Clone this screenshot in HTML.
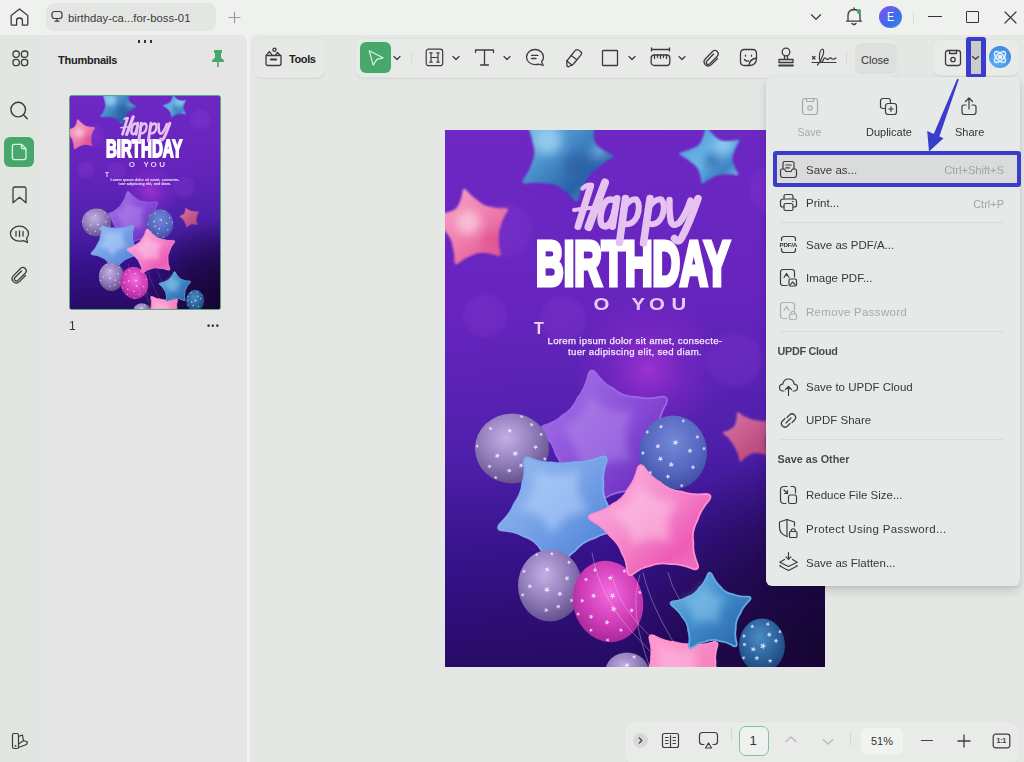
<!DOCTYPE html>
<html><head><meta charset="utf-8">
<style>
*{box-sizing:border-box;margin:0;padding:0}
html,body{width:1024px;height:762px;overflow:hidden}
body{position:relative;background:#eef1ee;font-family:"Liberation Sans",sans-serif;color:#333}
.a{position:absolute}
svg.i{position:absolute;fill:none;stroke:#3c3c3c;stroke-width:1.3;stroke-linecap:round;stroke-linejoin:round}
.mi{position:absolute;left:806px;font-size:11.5px;color:#383838;white-space:nowrap;line-height:14px}
.sep{position:absolute;left:780px;width:223px;height:1px;background:#d9dbd9}
</style></head>
<body>
<!-- top bar -->
<div class="a" style="left:0;top:0;width:1024px;height:35px;background:#eef1ee"></div>
<!-- left rail -->
<div class="a" style="left:0;top:35px;width:40px;height:727px;background:#e1e6e1"></div>
<!-- thumbnails panel -->
<div class="a" style="left:36px;top:35px;width:211px;height:727px;background:linear-gradient(90deg,#e2e6e2,#e4e5e4 8px);border-radius:8px 8px 0 0"></div>
<!-- main canvas -->
<div class="a" style="left:247px;top:35px;width:3px;height:727px;background:#f0f1f0"></div><div class="a" style="left:250px;top:35px;width:774px;height:727px;background:#e4e7e4;border-radius:8px 0 0 0"></div>


<!-- TOP BAR -->
<svg class="i" style="left:9px;top:7px" width="21" height="20" viewBox="0 0 21 20"><path d="M2.2 17.2V8.6L10.5 2 18.8 8.6V17.2Q18.8 18.2 17.8 18.2H13.4V13.2Q13.4 11 10.5 11 7.6 11 7.6 13.2V18.2H3.2Q2.2 18.2 2.2 17.2Z"/></svg>
<div class="a" style="left:46px;top:3px;width:170px;height:28px;border-radius:8px;background:#e4e6e4"></div>
<svg class="i" style="left:51px;top:10px;stroke-width:1.2" width="12" height="13" viewBox="0 0 12 13"><rect x="1" y="1.5" width="10" height="7" rx="2.5"/><path d="M6 8.5V11M4 11.2H8"/></svg>
<div class="a" style="left:68px;top:12px;font-size:11.3px;color:#3a3a3a;white-space:nowrap">birthday-ca...for-boss-01</div>
<svg class="i" style="left:228px;top:11px;stroke:#9a9a9a;stroke-width:1.1" width="13" height="13" viewBox="0 0 13 13"><path d="M6.5 1V12M1 6.5H12"/></svg>

<svg class="i" style="left:810px;top:13px;stroke-width:1.3" width="12" height="8" viewBox="0 0 12 8"><path d="M1.5 1.8L6 6.2 10.5 1.8"/></svg>
<svg class="i" style="left:845px;top:6px;stroke-width:1.3" width="18" height="20" viewBox="0 0 18 20"><path d="M3 15V9.5Q3 4 9 3.5 15 4 15 9.5V15M1.5 15.2H16.5M7 17.5Q9 19.5 11 17.5M9 3.5V2"/></svg>
<div class="a" style="left:856.5px;top:9px;width:4.5px;height:4.5px;border-radius:50%;background:#3aa86a"></div>
<div class="a" style="left:879px;top:6px;width:23px;height:22px;border-radius:50%;background:linear-gradient(135deg,#8a4ff2,#3b6fe8 60%,#2f8fe0)"></div>
<div class="a" style="left:886.5px;top:10px;font-size:13px;color:#fff;line-height:14px;transform:scaleX(0.82);transform-origin:0 0">E</div>
<div class="a" style="left:913px;top:12px;width:1px;height:13px;background:#dcdedc"></div>
<div class="a" style="left:928px;top:16px;width:14px;height:1.4px;background:#333"></div>
<div class="a" style="left:965.5px;top:11px;width:13.5px;height:11.5px;border:1.4px solid #333;border-radius:1px"></div>
<svg class="i" style="left:1004px;top:11px;stroke-width:1.2" width="13" height="13" viewBox="0 0 13 13"><path d="M1 1L12 12M12 1L1 12"/></svg>

<!-- LEFT RAIL -->
<svg class="i" style="left:11.5px;top:50px;stroke-width:1.3" width="17" height="17" viewBox="0 0 17 17"><rect x="1" y="1" width="6.3" height="6.3" rx="2.6"/><rect x="9.4" y="1" width="6.3" height="6.3" rx="2.6"/><rect x="1" y="9.4" width="6.3" height="6.3" rx="2.6"/><rect x="9.4" y="9.4" width="6.3" height="6.3" rx="2.6"/></svg>
<svg class="i" style="left:9px;top:100px;stroke-width:1.4" width="20" height="21" viewBox="0 0 20 21"><circle cx="9.2" cy="9.6" r="7.3"/><path d="M14.6 15L18.3 18.8"/></svg>
<div class="a" style="left:4px;top:137px;width:30px;height:30px;border-radius:6px;background:#48a86b"></div>
<svg class="i" style="left:11px;top:143px;stroke:#d8f5e0;stroke-width:1.3" width="17" height="18" viewBox="0 0 17 18"><path d="M3.5 1.3H10.5L15 5.8V14.5Q15 16.6 12.9 16.6H3.5Q1.4 16.6 1.4 14.5V3.4Q1.4 1.3 3.5 1.3ZM10.5 1.3V3.8Q10.5 5.8 12.5 5.8H15"/></svg>
<svg class="i" style="left:11px;top:186px;stroke-width:1.3" width="17" height="18" viewBox="0 0 17 18"><path d="M2 2.8Q2 1 3.8 1H13.2Q15 1 15 2.8V16.8L8.5 11.2 2 16.8Z"/></svg>
<svg class="i" style="left:9px;top:225px;stroke-width:1.3" width="21" height="19" viewBox="0 0 21 19"><path d="M10.5 1.2C15.5 1.2 19.5 4.6 19.5 8.6 19.5 10.6 18.8 12 17.6 13.2L18.4 17.5 14.6 15.6C13.4 16 12 16.2 10.5 16.2 5.5 16.2 1.4 12.8 1.4 8.6 1.4 4.6 5.5 1.2 10.5 1.2Z"/><path d="M7 6.5V11M10.5 6V11.5M14 6.5V11"/></svg>
<svg class="i" style="left:11px;top:266px;stroke-width:1.3" width="17" height="19" viewBox="0 0 17 19"><path d="M10.5 5L4 11.5Q2.6 13 4 14.4 5.4 15.8 6.9 14.4L14.2 7.2Q16.5 4.8 14.2 2.5 11.9 0.2 9.5 2.5L2.5 9.6Q-0.5 12.6 2.4 15.6 5.4 18.6 8.4 15.6L14.5 9.5"/></svg>
<svg class="i" style="left:11px;top:732px;stroke-width:1.2" width="18" height="18" viewBox="0 0 18 18"><rect x="1.5" y="1.5" width="6" height="15" rx="1.5"/><path d="M7.5 4.5L11.5 3 12.5 9M7.5 15.5L15.5 12.5 16.5 10 12.5 8.5 7.5 12"/><circle cx="4.5" cy="14" r="0.3"/></svg>

<!-- THUMBNAILS PANEL -->
<div class="a" style="left:138px;top:39.5px;width:2px;height:3px;background:#333"></div><div class="a" style="left:144px;top:39.5px;width:2px;height:3px;background:#333"></div><div class="a" style="left:150px;top:39.5px;width:2px;height:3px;background:#333"></div>
<div class="a" style="left:58px;top:53.5px;font-size:11px;font-weight:700;color:#222;white-space:nowrap;letter-spacing:-0.25px">Thumbnails</div>
<svg class="a" style="left:210px;top:49px" width="16" height="19" viewBox="0 0 16 19"><path d="M4 1H12V3.5L11 4.5V8.5L14 11.5V13H2V11.5L5 8.5V4.5L4 3.5Z" fill="#48a86b"/><path d="M8 13V18" stroke="#48a86b" stroke-width="1.6"/></svg>
<div class="a" style="left:69px;top:95px;width:152px;height:215px;border:1.8px solid #55aa78;border-radius:3px;overflow:hidden;background:#2a0f5a">
  <!--THUMB--><svg width='150' height='213' viewBox='0 0 380 537' preserveAspectRatio='none' style='position:absolute;left:-0.5px;top:-0.5px'><use href='#pageart'/></svg><!--/THUMB-->
</div>
<div class="a" style="left:69px;top:319px;font-size:12px;color:#333">1</div>
<div class="a" style="left:207px;top:321.5px;font-size:9px;color:#333;letter-spacing:1.2px;font-weight:700;line-height:8px">•••</div>


<!-- TOOLBAR -->
<div class="a" style="left:254px;top:39px;width:71px;height:38px;border-radius:8px;background:#e6e9e6;box-shadow:0 0 0 1px #e0e3e0,0 1.5px 2px rgba(0,0,0,0.07)"></div>
<svg class="i" style="left:264px;top:47px;stroke-width:1.3" width="19" height="20" viewBox="0 0 19 20"><path d="M2 8.5H17V16.5Q17 18.5 15 18.5H4Q2 18.5 2 16.5Z"/><path d="M7 12.5H12" stroke-width="2.2"/><path d="M2.5 8.2L5.5 4.5 8 8.2M11.5 8.2L13.5 5.5 16 8.2"/><circle cx="10.5" cy="2.8" r="1.6"/></svg>
<div class="a" style="left:289px;top:53px;font-size:11px;font-weight:700;color:#222;letter-spacing:-0.4px">Tools</div>

<div class="a" style="left:356px;top:39px;width:542px;height:38px;border-radius:8px;background:#e7eae7;box-shadow:0 0 0 1px #e0e3e0,0 1.5px 2px rgba(0,0,0,0.07)"></div>
<div class="a" style="left:360px;top:42px;width:31px;height:31px;border-radius:6px;background:#48a86c;box-shadow:0 0 0 1px #d4f2dc"></div>
<svg class="i" style="left:367px;top:49px;stroke:#d6f7df;stroke-width:1.2" width="18" height="18" viewBox="0 0 18 18"><path d="M2.2 1.8L16 8.8 9.8 10.4 6.2 16.2Z"/></svg>
<svg class="i" style="left:393px;top:55px;stroke-width:1.2" width="8" height="6" viewBox="0 0 8 6"><path d="M1 1.5L4 4.5 7 1.5"/></svg>
<div class="a" style="left:411px;top:51px;width:1px;height:14px;background:#d8dbd8"></div>

<svg class="i" style="left:425px;top:48px;stroke-width:1.2" width="19" height="19" viewBox="0 0 19 19"><rect x="1.2" y="1.2" width="16.5" height="16.5" rx="2.5"/><path d="M6 4.8V14.2M13 4.8V14.2M6 9.5H13M4.8 4.8H7.2M11.8 4.8H14.2M4.8 14.2H7.2M11.8 14.2H14.2"/></svg>
<svg class="i" style="left:452px;top:55px;stroke-width:1.2" width="8" height="6" viewBox="0 0 8 6"><path d="M1 1.5L4 4.5 7 1.5"/></svg>
<svg class="i" style="left:474px;top:48px;stroke-width:1.3" width="21" height="19" viewBox="0 0 21 19"><path d="M1.5 4.5V2H19.5V4.5M10.5 2V17M6.5 17H14.5"/></svg>
<svg class="i" style="left:503px;top:55px;stroke-width:1.2" width="8" height="6" viewBox="0 0 8 6"><path d="M1 1.5L4 4.5 7 1.5"/></svg>
<svg class="i" style="left:525px;top:48px;stroke-width:1.3" width="20" height="19" viewBox="0 0 20 19"><path d="M10 1.5C14.7 1.5 18.5 4.9 18.5 9 18.5 11 17.8 12.6 16.6 13.9L18.2 17.5 13.6 16.1C12.5 16.5 11.3 16.6 10 16.6 5.3 16.6 1.5 13.2 1.5 9 1.5 4.9 5.3 1.5 10 1.5Z"/><path d="M6.5 7.3H13M6.5 10.5H11"/></svg>
<svg class="i" style="left:564px;top:48px;stroke-width:1.3" width="19" height="20" viewBox="0 0 19 20"><path d="M11.5 2.2Q13 1 14.5 2L17 4Q18.2 5.2 17 6.8L9.5 16 4.5 18.8 3 18.2 2.8 13Z"/><path d="M2.8 13L8.2 17.2M7.2 7.5L12.5 11.5"/></svg>
<svg class="i" style="left:601px;top:49px;stroke-width:1.3" width="18" height="18" viewBox="0 0 18 18"><rect x="1.5" y="1.5" width="15" height="15" rx="0.8"/></svg>
<svg class="i" style="left:628px;top:55px;stroke-width:1.2" width="8" height="6" viewBox="0 0 8 6"><path d="M1 1.5L4 4.5 7 1.5"/></svg>
<svg class="i" style="left:650px;top:47px;stroke-width:1.3" width="21" height="20" viewBox="0 0 21 20"><path d="M1.5 1V4M19.5 1V4M1.5 2.5H19.5"/><rect x="1.2" y="8" width="18.6" height="10.5" rx="3"/><path d="M4.5 8V11.5M7.5 8V10.5M10.5 8V11.5M13.5 8V10.5M16.5 8V11.5"/></svg>
<svg class="i" style="left:678px;top:55px;stroke-width:1.2" width="8" height="6" viewBox="0 0 8 6"><path d="M1 1.5L4 4.5 7 1.5"/></svg>
<svg class="i" style="left:702px;top:48px;stroke-width:1.3" width="19" height="20" viewBox="0 0 19 20"><path d="M11.5 6L5 13Q3.6 14.5 5 15.9 6.4 17.2 7.9 15.8L15.2 8.2Q17.5 5.8 15.2 3.5 12.9 1.2 10.5 3.5L3.5 10.8Q0.5 13.8 3.4 16.8 6.4 19.6 9.4 16.6L15.5 10.5"/></svg>
<svg class="i" style="left:739px;top:48px;stroke-width:1.3" width="19" height="19" viewBox="0 0 19 19"><path d="M17.5 10V5.5Q17.5 1.5 13.5 1.5H5.5Q1.5 1.5 1.5 5.5V13.5Q1.5 17.5 5.5 17.5H10Q17.5 17.5 17.5 10Z"/><path d="M10 17.5Q10 11.5 17.5 10M6.5 7.2V8.2M12.5 7.2V8.2M5.5 11.5Q7 13.5 9.5 13"/></svg>
<svg class="i" style="left:777px;top:47px;stroke-width:1.3" width="18" height="21" viewBox="0 0 18 21"><circle cx="9" cy="5" r="3.8"/><path d="M7.5 8.8V12M10.5 8.8V12M2 12.5H16V15.5H2Z"/><path d="M2 18.5H16" stroke-width="1.8"/></svg>
<svg class="i" style="left:811px;top:47px;stroke-width:1.2" width="26" height="20" viewBox="0 0 26 20"><path d="M1.5 9.5L4 12M4 9.5L1.5 12"/><path d="M1 15.5H25"/><path d="M6.5 18Q10 14 12 8 13.5 2.5 11.5 2 9 2.5 8.5 8 8 14 10 15 11.5 15.5 13 11.5 14 10 15 11.5 16 13.5 18 11.5 20 10 21 12 23 12.5 25 11"/></svg>
<div class="a" style="left:846px;top:51px;width:1px;height:13px;background:#d6d9d6"></div>
<div class="a" style="left:855px;top:43px;width:42px;height:31px;border-radius:6px;background:#dde0dd"></div>
<div class="a" style="left:861px;top:53.5px;font-size:11px;color:#333;letter-spacing:0px">Close</div>

<div class="a" style="left:933px;top:40px;width:86px;height:35px;border-radius:8px;background:#e8ebe8;box-shadow:0 0 0 1px #e0e3e0,0 1.5px 2px rgba(0,0,0,0.07)"></div>
<svg class="i" style="left:944px;top:49px;stroke-width:1.3" width="18" height="18" viewBox="0 0 18 18"><path d="M4 1.5H14Q16.5 1.5 16.5 4V14Q16.5 16.5 14 16.5H4Q1.5 16.5 1.5 14V4Q1.5 1.5 4 1.5Z"/><path d="M5.5 1.5V4.5H12.5V1.5"/><circle cx="9" cy="10.5" r="2.2"/></svg>
<div class="a" style="left:966px;top:37px;width:20px;height:40.5px;border:4.5px solid #3a3ccb;border-left-width:5px;border-right-width:5px;border-radius:3px;background:#c9ccc9"></div>
<svg class="i" style="left:971px;top:55px;stroke-width:1.2" width="9" height="6" viewBox="0 0 9 6"><path d="M1.5 1.5L4.5 4.2 7.5 1.5"/></svg>
<div class="a" style="left:989px;top:46px;width:22px;height:22px;border-radius:50%;background:radial-gradient(circle at 40% 65%,#62b8f0,#4690e6 60%,#3f82e0)"></div>
<svg class="i" style="left:989px;top:46px;stroke:#eaf6ff;stroke-width:1.4" width="22" height="22" viewBox="0 0 22 22"><ellipse cx="11" cy="11" rx="7" ry="3.4" transform="rotate(-45 11 11)"/><ellipse cx="11" cy="11" rx="7" ry="3.4" transform="rotate(45 11 11)"/><circle cx="11" cy="11" r="1.5" fill="#eaf6ff"/></svg>


<!--PAGE--><div class='a' style='left:445px;top:129.5px;width:380px;height:537px;overflow:hidden'><svg id='pagesvg' width='380' height='537' viewBox='0 0 380 537'><defs>
<linearGradient id='bg' gradientUnits='userSpaceOnUse' x1='0' y1='0' x2='40' y2='537'>
  <stop offset='0' stop-color='#6e28c4'/>
  <stop offset='0.35' stop-color='#6624bd'/>
  <stop offset='0.6' stop-color='#5020ac'/>
  <stop offset='0.8' stop-color='#36128a'/>
  <stop offset='1' stop-color='#280b66'/>
</linearGradient>
<radialGradient id='glow' gradientUnits='userSpaceOnUse' cx='203' cy='240' r='75'>
  <stop offset='0' stop-color='#b838dc' stop-opacity='0.7'/>
  <stop offset='0.5' stop-color='#a030d4' stop-opacity='0.3'/>
  <stop offset='1' stop-color='#a030d4' stop-opacity='0'/>
</radialGradient>
<radialGradient id='dark' gradientUnits='userSpaceOnUse' cx='390' cy='520' r='210'>
  <stop offset='0' stop-color='#12042a' stop-opacity='0.92'/>
  <stop offset='0.55' stop-color='#180634' stop-opacity='0.6'/>
  <stop offset='1' stop-color='#180634' stop-opacity='0'/>
</radialGradient>
<radialGradient id='bok' cx='0.5' cy='0.5' r='0.5'>
  <stop offset='0' stop-color='#9a48e0' stop-opacity='0.22'/>
  <stop offset='0.8' stop-color='#9a48e0' stop-opacity='0.16'/>
  <stop offset='1' stop-color='#9a48e0' stop-opacity='0'/>
</radialGradient>
<filter id='blur2' x='-20%' y='-20%' width='140%' height='140%'><feGaussianBlur stdDeviation='1.2'/></filter>
<filter id='blur3' x='-50%' y='-50%' width='200%' height='200%'><feGaussianBlur stdDeviation='5'/></filter><filter id='blur1' x='-20%' y='-20%' width='140%' height='140%'><feGaussianBlur stdDeviation='0.6'/></filter>
<linearGradient id='gBlueTop' x1='0' y1='0' x2='1' y2='1'>
  <stop offset='0' stop-color='#8cc8ee'/><stop offset='0.4' stop-color='#4a90cc'/><stop offset='0.7' stop-color='#2a62a8'/><stop offset='1' stop-color='#5aa0d8'/>
</linearGradient>
<linearGradient id='gBlueTop2' x1='0' y1='0' x2='1' y2='1'>
  <stop offset='0' stop-color='#4c90d0'/><stop offset='0.5' stop-color='#6cb8e8'/><stop offset='0.75' stop-color='#3d82c4'/><stop offset='1' stop-color='#8fcdf0'/>
</linearGradient>
<linearGradient id='gPinkL' x1='0' y1='0' x2='1' y2='1'>
  <stop offset='0' stop-color='#f7a8c8'/><stop offset='0.5' stop-color='#f081b0'/><stop offset='1' stop-color='#d84a8c'/>
</linearGradient>
<linearGradient id='gPurple' x1='0' y1='0' x2='1' y2='1'>
  <stop offset='0' stop-color='#a67ae8'/><stop offset='0.5' stop-color='#8a4cd8'/><stop offset='1' stop-color='#5a22b0'/>
</linearGradient>
<linearGradient id='gBlueBig' x1='0' y1='0' x2='1' y2='1'>
  <stop offset='0' stop-color='#98bcf0'/><stop offset='0.4' stop-color='#7aa4e8'/><stop offset='0.7' stop-color='#5e8ede'/><stop offset='1' stop-color='#4a74cc'/>
</linearGradient>
<linearGradient id='gPinkBig' x1='0' y1='0' x2='1' y2='1'>
  <stop offset='0' stop-color='#ffb6e2'/><stop offset='0.45' stop-color='#f58ccc'/><stop offset='0.75' stop-color='#ee5cb6'/><stop offset='1' stop-color='#f07cc4'/>
</linearGradient>
<linearGradient id='gBlueSm' x1='0' y1='0' x2='1' y2='1'>
  <stop offset='0' stop-color='#78bce8'/><stop offset='0.45' stop-color='#3f8ccc'/><stop offset='1' stop-color='#2a62a4'/>
</linearGradient>
<linearGradient id='gPinkBot' x1='0' y1='0' x2='1' y2='1'>
  <stop offset='0' stop-color='#ffa0d0'/><stop offset='1' stop-color='#f06ab4'/>
</linearGradient>
<linearGradient id='gRedSm' x1='0' y1='0' x2='1' y2='1'>
  <stop offset='0' stop-color='#f08aa6'/><stop offset='0.6' stop-color='#d85c80'/><stop offset='1' stop-color='#c04a70'/>
</linearGradient>
<radialGradient id='bLilac' cx='0.42' cy='0.35' r='0.7'>
  <stop offset='0' stop-color='#c4aee6'/><stop offset='0.5' stop-color='#9480bc'/><stop offset='1' stop-color='#5e4a88'/>
</radialGradient>
<radialGradient id='bBlueDot' cx='0.5' cy='0.35' r='0.7'>
  <stop offset='0' stop-color='#7488d8'/><stop offset='0.6' stop-color='#5466be'/><stop offset='1' stop-color='#3a489e'/>
</radialGradient>
<radialGradient id='bMag' cx='0.55' cy='0.4' r='0.7'>
  <stop offset='0' stop-color='#f46ae0'/><stop offset='0.55' stop-color='#cf3cb6'/><stop offset='1' stop-color='#9a2090'/>
</radialGradient>
<radialGradient id='bDkBlue' cx='0.45' cy='0.35' r='0.7'>
  <stop offset='0' stop-color='#4a8cc4'/><stop offset='0.6' stop-color='#2a5e98'/><stop offset='1' stop-color='#1c3e74'/>
</radialGradient>
</defs><g id='pageart'><rect width='380' height='537' fill='url(#bg)'/><rect width='380' height='537' fill='url(#glow)'/><rect width='380' height='537' fill='url(#dark)'/><circle cx='40' cy='186' r='24' fill='url(#bok)'/><circle cx='118' cy='190' r='26' fill='url(#bok)'/><circle cx='330' cy='60' r='28' fill='url(#bok)'/><circle cx='60' cy='100' r='30' fill='url(#bok)'/><circle cx='290' cy='230' r='30' fill='url(#bok)'/><g filter='url(#blur2)'><clipPath id='ctb'><path d='M80.6 -8.6 Q79.0 -13.5 84.2 -12.3 Q97.1 -7.3 106.8 -6.8 Q118.7 -3.9 128.7 -8.6 Q137.3 -10.7 147.7 -17.5 Q152.0 -19.5 151.4 -15.2 Q148.8 -4.0 149.0 3.7 Q147.8 13.6 154.4 17.4 Q159.1 21.2 167.1 24.4 Q170.0 26.0 166.6 28.4 Q156.8 33.3 151.4 38.8 Q143.5 44.4 140.0 52.9 Q135.9 59.2 133.5 69.3 Q132.0 73.0 129.3 70.5 Q123.4 62.9 117.4 59.3 Q111.2 53.5 100.6 53.5 Q92.5 52.0 80.6 53.5 Q76.0 53.5 78.0 49.7 Q84.5 40.6 86.8 33.0 Q91.4 24.1 87.7 12.9 Q86.4 3.6 80.6 -8.6 Z'/></clipPath><path d='M80.6 -8.6 Q79.0 -13.5 84.2 -12.3 Q97.1 -7.3 106.8 -6.8 Q118.7 -3.9 128.7 -8.6 Q137.3 -10.7 147.7 -17.5 Q152.0 -19.5 151.4 -15.2 Q148.8 -4.0 149.0 3.7 Q147.8 13.6 154.4 17.4 Q159.1 21.2 167.1 24.4 Q170.0 26.0 166.6 28.4 Q156.8 33.3 151.4 38.8 Q143.5 44.4 140.0 52.9 Q135.9 59.2 133.5 69.3 Q132.0 73.0 129.3 70.5 Q123.4 62.9 117.4 59.3 Q111.2 53.5 100.6 53.5 Q92.5 52.0 80.6 53.5 Q76.0 53.5 78.0 49.7 Q84.5 40.6 86.8 33.0 Q91.4 24.1 87.7 12.9 Q86.4 3.6 80.6 -8.6 Z' fill='url(#gBlueTop)'/><g clip-path='url(#ctb)' filter='url(#blur3)'><circle cx='133.0' cy='35.5' r='13' fill='#2a62a4' opacity='0.8'/><circle cx='103.0' cy='10.5' r='14' fill='#a8dcf6' opacity='0.7'/><circle cx='155.0' cy='20.5' r='9' fill='#8cc8ec' opacity='0.6'/></g><clipPath id='ctr'><path d='M235.6 25.3 Q233.0 23.5 235.8 22.5 Q243.6 20.7 248.3 18.1 Q254.8 15.8 256.7 10.0 Q259.0 5.8 260.2 -1.0 Q261.0 -3.5 262.8 -1.5 Q267.0 4.2 270.9 7.1 Q275.1 11.6 281.1 11.0 Q285.8 11.4 292.4 9.8 Q295.0 9.5 293.9 11.9 Q290.1 17.9 288.8 22.6 Q286.2 28.2 288.5 33.4 Q289.6 37.8 293.0 43.3 Q294.0 45.5 291.3 45.3 Q284.4 43.9 279.5 44.6 Q273.2 44.2 268.2 47.3 Q263.8 48.9 258.7 53.2 Q256.5 54.5 256.1 52.2 Q255.9 46.2 254.2 42.2 Q253.2 37.0 247.1 32.9 Q243.0 29.1 235.6 25.3 Z'/></clipPath><path d='M235.6 25.3 Q233.0 23.5 235.8 22.5 Q243.6 20.7 248.3 18.1 Q254.8 15.8 256.7 10.0 Q259.0 5.8 260.2 -1.0 Q261.0 -3.5 262.8 -1.5 Q267.0 4.2 270.9 7.1 Q275.1 11.6 281.1 11.0 Q285.8 11.4 292.4 9.8 Q295.0 9.5 293.9 11.9 Q290.1 17.9 288.8 22.6 Q286.2 28.2 288.5 33.4 Q289.6 37.8 293.0 43.3 Q294.0 45.5 291.3 45.3 Q284.4 43.9 279.5 44.6 Q273.2 44.2 268.2 47.3 Q263.8 48.9 258.7 53.2 Q256.5 54.5 256.1 52.2 Q255.9 46.2 254.2 42.2 Q253.2 37.0 247.1 32.9 Q243.0 29.1 235.6 25.3 Z' fill='url(#gBlueTop2)'/><g clip-path='url(#ctr)' filter='url(#blur3)'><circle cx='267.0' cy='30.5' r='8' fill='#2e6eb0' opacity='0.8'/><circle cx='280.0' cy='15.5' r='9' fill='#a8dcf6' opacity='0.6'/></g><clipPath id='cpl'><path d='M-12.2 88.5 Q-15.0 85.5 -11.5 84.8 Q-2.0 84.0 4.1 81.7 Q12.2 80.1 14.2 73.3 Q16.7 68.3 17.8 60.4 Q18.6 57.5 21.3 60.0 Q27.4 67.2 33.2 70.7 Q39.4 76.4 46.8 76.9 Q52.5 78.6 60.8 78.0 Q64.0 78.2 62.6 81.3 Q57.7 88.6 56.2 94.7 Q52.9 101.7 53.8 109.1 Q53.3 115.2 55.6 123.3 Q56.0 126.5 53.1 125.9 Q45.8 123.1 40.2 123.1 Q33.4 121.6 26.3 125.8 Q20.2 128.0 12.9 133.7 Q9.8 135.5 9.4 132.0 Q9.7 122.9 7.6 116.5 Q6.7 108.4 0.2 101.5 Q-3.8 95.2 -12.2 88.5 Z'/></clipPath><path d='M-12.2 88.5 Q-15.0 85.5 -11.5 84.8 Q-2.0 84.0 4.1 81.7 Q12.2 80.1 14.2 73.3 Q16.7 68.3 17.8 60.4 Q18.6 57.5 21.3 60.0 Q27.4 67.2 33.2 70.7 Q39.4 76.4 46.8 76.9 Q52.5 78.6 60.8 78.0 Q64.0 78.2 62.6 81.3 Q57.7 88.6 56.2 94.7 Q52.9 101.7 53.8 109.1 Q53.3 115.2 55.6 123.3 Q56.0 126.5 53.1 125.9 Q45.8 123.1 40.2 123.1 Q33.4 121.6 26.3 125.8 Q20.2 128.0 12.9 133.7 Q9.8 135.5 9.4 132.0 Q9.7 122.9 7.6 116.5 Q6.7 108.4 0.2 101.5 Q-3.8 95.2 -12.2 88.5 Z' fill='url(#gPinkL)'/><g clip-path='url(#cpl)' filter='url(#blur3)'><circle cx='23.0' cy='92.5' r='12' fill='#fcd0e0' opacity='0.75'/><circle cx='47.0' cy='110.5' r='10' fill='#e0508e' opacity='0.7'/></g><path d='M278.6 304.1 Q277.0 302.5 278.7 301.7 Q283.8 300.5 286.3 298.4 Q290.2 296.7 290.8 292.1 Q292.1 289.1 291.8 283.5 Q292.0 281.5 294.0 282.6 Q298.9 286.9 303.0 287.7 Q307.7 290.3 313.5 290.4 Q317.7 291.8 324.5 290.5 Q327.0 290.5 326.1 292.8 Q322.4 298.4 322.0 302.7 Q319.9 308.0 320.8 313.2 Q320.2 317.3 322.6 323.2 Q323.0 325.5 320.9 325.1 Q315.5 323.0 311.9 323.3 Q307.2 322.4 303.5 325.4 Q300.3 326.8 296.6 331.2 Q295.0 332.5 294.3 330.2 Q293.5 323.7 291.1 320.3 Q289.4 315.0 285.7 311.3 Q283.8 307.6 278.6 304.1 Z' fill='url(#gRedSm)' opacity='0.85'/></g><path d='M97.4 302.7 Q94.4 297.9 98.7 295.6 Q111.3 292.0 117.4 285.4 Q127.3 280.1 132.9 267.5 Q139.7 259.8 143.6 243.6 Q146.0 238.1 150.1 241.9 Q159.0 254.3 168.0 258.4 Q177.4 267.1 191.2 266.9 Q201.3 269.9 217.6 266.6 Q223.6 266.5 221.6 272.7 Q212.9 288.4 213.0 300.0 Q208.5 314.4 211.6 328.2 Q210.5 339.3 217.6 354.5 Q219.0 360.5 212.8 360.6 Q196.1 357.2 185.6 360.9 Q171.2 361.1 158.9 368.4 Q147.9 370.8 135.4 382.3 Q130.0 385.5 128.4 378.9 Q127.6 360.1 121.2 349.9 Q117.5 334.6 110.6 323.6 Q108.2 313.2 97.4 302.7 Z' fill='url(#gPurple)' stroke='#9a68e6' stroke-width='1.8'/><path d='M118.7 299.5 Q117.0 296.9 119.4 295.6 Q126.3 293.7 129.7 290.1 Q135.1 287.1 138.2 280.2 Q141.9 275.9 144.1 267.0 Q145.4 264.0 147.6 266.1 Q152.5 272.9 157.5 275.2 Q162.7 280.0 170.3 279.9 Q175.8 281.5 184.8 279.7 Q188.1 279.6 187.0 283.1 Q182.2 291.7 182.3 298.1 Q179.8 306.0 181.5 313.6 Q180.9 319.7 184.8 328.1 Q185.6 331.4 182.1 331.4 Q173.0 329.6 167.2 331.6 Q159.3 331.7 152.5 335.7 Q146.5 337.0 139.5 343.4 Q136.6 345.1 135.7 341.5 Q135.3 331.1 131.8 325.5 Q129.7 317.1 125.9 311.0 Q124.6 305.3 118.7 299.5 Z' fill='#c0a0f2' opacity='0.38' filter='url(#blur3)'/><clipPath id='c1'><ellipse cx='67.0' cy='318.5' rx='37.0' ry='35.0' transform='rotate(0 67.0 318.5)'/></clipPath><ellipse cx='67.0' cy='318.5' rx='37.0' ry='35.0' fill='url(#bLilac)' transform='rotate(0 67.0 318.5)'/><g clip-path='url(#c1)' fill='#f4e8ff' opacity='0.85'><polygon points='77.3,333.0 77.2,334.9 78.8,335.9 77.0,336.3 76.5,338.1 75.5,336.5 73.7,336.7 74.9,335.2 74.2,333.5 75.9,334.2'/><polygon points='32.6,314.1 32.8,315.5 34.2,315.9 32.9,316.6 33.0,318.0 31.9,317.0 30.6,317.5 31.2,316.2 30.4,315.0 31.8,315.2'/><polygon points='99.9,326.8 100.4,328.2 101.8,328.4 100.7,329.3 100.9,330.7 99.8,329.9 98.5,330.5 98.9,329.2 97.9,328.2 99.3,328.1'/><polygon points='65.1,298.0 65.6,299.9 67.4,300.3 65.8,301.3 66.0,303.2 64.5,302.0 62.8,302.8 63.5,301.0 62.2,299.6 64.1,299.7'/><polygon points='71.3,320.5 71.5,322.8 73.6,323.7 71.4,324.6 71.3,326.8 69.8,325.1 67.5,325.6 68.7,323.7 67.6,321.7 69.8,322.3'/><polygon points='51.1,345.6 51.4,347.0 52.7,347.4 51.5,348.1 51.6,349.5 50.5,348.6 49.2,349.1 49.8,347.8 48.9,346.7 50.3,346.8'/><polygon points='87.1,292.5 87.4,294.0 88.8,294.4 87.5,295.2 87.6,296.7 86.5,295.6 85.1,296.2 85.7,294.8 84.7,293.6 86.2,293.8'/><polygon points='45.6,296.3 46.1,297.8 47.7,298.0 46.5,298.9 46.8,300.5 45.5,299.6 44.1,300.4 44.5,298.9 43.4,297.8 44.9,297.7'/><polygon points='97.1,302.5 97.0,304.0 98.3,304.7 96.8,305.1 96.5,306.6 95.7,305.3 94.2,305.4 95.2,304.3 94.6,302.9 96.0,303.5'/><polygon points='53.4,323.0 53.4,325.0 55.2,325.9 53.3,326.5 53.0,328.5 51.8,326.9 49.9,327.3 51.0,325.6 50.1,323.9 52.0,324.5'/><polygon points='92.0,315.1 91.7,316.8 93.0,317.9 91.3,318.1 90.6,319.7 89.9,318.1 88.1,318.0 89.5,316.8 89.0,315.1 90.6,316.0'/><polygon points='45.8,334.5 45.5,336.0 46.8,337.0 45.2,337.2 44.6,338.7 44.0,337.3 42.4,337.2 43.5,336.1 43.1,334.6 44.5,335.4'/><polygon points='89.5,341.6 89.7,343.1 91.1,343.5 89.8,344.2 89.8,345.6 88.8,344.6 87.4,345.0 88.1,343.8 87.2,342.6 88.6,342.8'/><polygon points='66.3,339.1 65.4,340.6 66.4,342.1 64.7,341.8 63.6,343.1 63.4,341.4 61.7,340.8 63.3,340.0 63.4,338.3 64.6,339.6'/><polygon points='76.7,284.4 77.2,285.7 78.6,285.8 77.6,286.7 77.9,288.1 76.7,287.4 75.5,288.1 75.8,286.7 74.7,285.8 76.1,285.7'/></g><clipPath id='c2'><ellipse cx='228.0' cy='322.5' rx='34.0' ry='37.0' transform='rotate(0 228.0 322.5)'/></clipPath><ellipse cx='228.0' cy='322.5' rx='34.0' ry='37.0' fill='url(#bBlueDot)' transform='rotate(0 228.0 322.5)'/><g clip-path='url(#c2)' fill='#f4e8ff' opacity='0.85'><polygon points='216.4,294.4 216.8,295.9 218.3,296.3 216.9,297.2 217.0,298.8 215.8,297.7 214.3,298.3 215.0,296.8 214.0,295.6 215.6,295.7'/><polygon points='239.8,289.4 239.2,290.7 240.2,291.8 238.7,291.7 237.9,293.0 237.6,291.5 236.2,291.2 237.4,290.4 237.3,289.0 238.4,289.9'/><polygon points='231.5,309.6 231.6,311.7 233.6,312.6 231.6,313.4 231.4,315.6 230.0,313.9 227.9,314.4 229.0,312.5 227.9,310.7 230.0,311.2'/><polygon points='199.5,321.5 198.9,322.9 199.9,324.1 198.4,323.9 197.6,325.2 197.2,323.7 195.8,323.4 197.1,322.6 197.0,321.1 198.1,322.1'/><polygon points='224.9,345.3 224.0,346.7 224.9,348.2 223.2,347.8 222.0,349.1 221.9,347.3 220.4,346.6 222.0,346.0 222.2,344.3 223.2,345.6'/><polygon points='203.2,300.1 203.2,301.5 204.5,302.2 203.1,302.6 202.9,304.1 202.1,302.9 200.6,303.1 201.5,301.9 200.8,300.7 202.2,301.1'/><polygon points='237.5,353.7 237.5,355.1 238.7,355.8 237.4,356.2 237.1,357.7 236.3,356.5 234.9,356.7 235.7,355.5 235.1,354.3 236.5,354.7'/><polygon points='254.2,305.6 253.4,306.9 254.2,308.3 252.7,307.9 251.7,309.1 251.6,307.5 250.1,306.9 251.6,306.3 251.7,304.8 252.7,306.0'/><polygon points='217.3,326.6 216.7,328.5 218.1,330.0 216.0,330.0 215.1,331.8 214.5,329.8 212.5,329.5 214.2,328.3 213.9,326.3 215.5,327.5'/><polygon points='248.4,334.8 248.8,336.5 250.4,336.9 249.0,337.7 249.1,339.4 247.8,338.3 246.3,338.9 246.9,337.4 245.9,336.1 247.5,336.2'/><polygon points='226.6,331.6 227.2,333.6 229.2,334.1 227.5,335.2 227.7,337.3 226.1,336.0 224.1,336.9 224.9,334.9 223.5,333.3 225.6,333.4'/><polygon points='213.4,313.4 213.8,315.3 215.7,315.8 214.1,316.8 214.2,318.7 212.7,317.5 210.9,318.2 211.7,316.4 210.4,315.0 212.3,315.1'/><polygon points='207.1,341.3 206.4,342.6 207.2,343.9 205.7,343.6 204.8,344.7 204.6,343.2 203.2,342.7 204.5,342.1 204.6,340.6 205.6,341.7'/><polygon points='260.6,317.1 260.0,318.5 260.9,319.6 259.5,319.5 258.7,320.7 258.4,319.3 257.0,318.9 258.2,318.1 258.1,316.7 259.2,317.7'/><polygon points='245.4,318.1 245.9,320.0 247.8,320.4 246.1,321.4 246.3,323.3 244.8,322.1 243.1,322.9 243.8,321.1 242.5,319.6 244.4,319.8'/></g><path d='M78.7 331.3 Q79.0 326.5 84.0 327.6 Q96.5 333.4 106.0 332.3 Q117.5 334.8 131.0 332.0 Q141.4 333.1 156.7 326.7 Q162.5 325.5 161.7 330.7 Q156.9 344.5 158.4 353.7 Q156.7 365.7 163.4 376.2 Q165.8 385.2 176.1 396.0 Q179.0 400.5 173.7 401.9 Q158.6 402.6 150.3 407.8 Q138.1 411.0 129.9 421.0 Q121.7 426.4 114.5 440.1 Q111.0 444.5 108.2 439.9 Q103.0 426.0 96.0 419.8 Q89.6 409.2 78.0 406.1 Q70.4 401.2 56.0 400.3 Q51.0 399.0 54.3 394.4 Q65.9 383.5 69.0 374.1 Q76.7 363.5 77.4 352.4 Q80.7 344.2 78.7 331.3 Z' fill='url(#gBlueBig)' stroke='#7cacec' stroke-width='1.8'/><path d='M89.0 342.7 Q89.2 340.1 92.0 340.7 Q98.9 343.9 104.0 343.3 Q110.4 344.7 117.8 343.1 Q123.5 343.7 131.9 340.2 Q135.1 339.6 134.7 342.4 Q132.0 350.0 132.9 355.0 Q131.9 361.7 135.6 367.4 Q136.9 372.4 142.6 378.3 Q144.2 380.8 141.3 381.5 Q133.0 382.0 128.4 384.8 Q121.7 386.6 117.2 392.1 Q112.7 395.1 108.7 402.6 Q106.8 405.0 105.3 402.5 Q102.4 394.8 98.6 391.4 Q95.1 385.6 88.7 383.9 Q84.4 381.2 76.6 380.7 Q73.8 380.0 75.6 377.4 Q82.0 371.4 83.7 366.3 Q87.9 360.4 88.3 354.3 Q90.2 349.8 89.0 342.7 Z' fill='#c0dcff' opacity='0.50' filter='url(#blur3)'/><clipPath id='c3'><ellipse cx='105.0' cy='455.5' rx='32.0' ry='36.0' transform='rotate(0 105.0 455.5)'/></clipPath><ellipse cx='105.0' cy='455.5' rx='32.0' ry='36.0' fill='url(#bLilac)' transform='rotate(0 105.0 455.5)'/><g clip-path='url(#c3)' fill='#f4e8ff' opacity='0.85'><polygon points='103.7,457.0 103.4,459.2 105.2,460.6 102.9,461.0 102.2,463.1 101.2,461.1 98.8,461.1 100.5,459.4 99.8,457.2 101.8,458.3'/><polygon points='133.1,451.0 133.0,452.6 134.4,453.3 132.9,453.7 132.5,455.2 131.7,453.9 130.2,454.1 131.2,452.9 130.5,451.5 132.0,452.0'/><polygon points='85.3,453.8 85.7,455.6 87.4,456.0 85.8,456.9 85.9,458.7 84.6,457.5 82.9,458.1 83.7,456.5 82.6,455.1 84.3,455.3'/><polygon points='115.0,474.7 114.4,476.4 115.7,477.6 113.9,477.6 113.0,479.1 112.5,477.5 110.8,477.1 112.3,476.1 112.0,474.4 113.4,475.4'/><polygon points='79.3,439.2 79.7,440.6 81.1,441.0 79.9,441.8 80.0,443.2 78.9,442.3 77.6,442.9 78.1,441.5 77.1,440.4 78.6,440.5'/><polygon points='116.6,461.4 116.1,463.4 117.7,464.8 115.6,464.9 114.8,466.8 114.0,464.9 112.0,464.7 113.6,463.4 113.1,461.4 114.9,462.5'/><polygon points='107.1,421.6 107.5,423.1 108.9,423.4 107.7,424.2 107.9,425.7 106.7,424.8 105.3,425.4 105.9,424.0 104.8,422.9 106.3,422.9'/><polygon points='102.2,477.9 102.2,479.6 103.7,480.4 102.0,480.9 101.7,482.6 100.7,481.2 99.0,481.4 100.1,480.0 99.4,478.5 101.0,479.1'/><polygon points='102.9,436.7 103.2,438.7 105.1,439.2 103.4,440.2 103.4,442.2 102.0,440.8 100.1,441.4 101.0,439.7 99.8,438.1 101.7,438.3'/><polygon points='127.4,468.2 127.6,469.8 129.1,470.4 127.6,471.0 127.6,472.6 126.5,471.5 125.0,471.9 125.7,470.5 124.8,469.2 126.4,469.5'/><polygon points='93.2,423.4 92.4,424.6 93.1,425.8 91.8,425.4 90.8,426.5 90.7,425.1 89.5,424.5 90.8,424.0 90.9,422.6 91.8,423.7'/><polygon points='124.0,446.5 123.2,448.2 124.4,449.6 122.6,449.4 121.6,451.0 121.2,449.2 119.4,448.7 121.0,447.8 120.9,445.9 122.3,447.1'/><polygon points='78.3,462.8 78.5,464.2 79.8,464.8 78.5,465.4 78.4,466.9 77.4,465.7 75.9,466.1 76.7,464.8 75.9,463.6 77.4,463.9'/><polygon points='125.7,430.9 125.0,432.2 125.8,433.5 124.4,433.2 123.5,434.4 123.3,432.9 121.8,432.4 123.2,431.8 123.2,430.3 124.3,431.3'/></g><clipPath id='c4'><ellipse cx='163.0' cy='471.5' rx='35.0' ry='41.0' transform='rotate(-14 163.0 471.5)'/></clipPath><ellipse cx='163.0' cy='471.5' rx='35.0' ry='41.0' fill='url(#bMag)' transform='rotate(-14 163.0 471.5)'/><g clip-path='url(#c4)' fill='#f4e8ff' opacity='0.85'><polygon points='147.4,484.4 147.2,486.2 148.7,487.2 146.9,487.6 146.4,489.3 145.5,487.7 143.7,487.8 145.0,486.5 144.4,484.8 146.0,485.5'/><polygon points='176.9,498.1 176.8,499.7 178.2,500.5 176.6,500.9 176.2,502.4 175.4,501.1 173.8,501.2 174.9,500.0 174.2,498.5 175.7,499.1'/><polygon points='142.4,447.6 142.0,449.1 143.1,450.2 141.6,450.3 140.9,451.7 140.4,450.2 138.8,450.0 140.0,449.1 139.7,447.5 141.0,448.4'/><polygon points='180.0,439.1 180.2,440.6 181.6,441.1 180.2,441.7 180.1,443.2 179.1,442.1 177.6,442.5 178.4,441.2 177.6,439.9 179.1,440.2'/><polygon points='165.3,445.4 165.9,447.1 167.8,447.3 166.3,448.4 166.7,450.2 165.2,449.2 163.6,450.1 164.0,448.4 162.7,447.1 164.5,447.0'/><polygon points='150.0,463.3 149.8,465.3 151.5,466.4 149.5,466.8 149.0,468.8 148.0,467.0 146.0,467.1 147.3,465.6 146.6,463.8 148.5,464.6'/><polygon points='188.6,478.9 187.7,480.4 188.7,481.8 187.0,481.4 186.0,482.7 185.8,481.1 184.2,480.5 185.7,479.8 185.8,478.1 186.9,479.3'/><polygon points='147.5,498.6 146.9,500.0 148.0,501.1 146.5,501.1 145.7,502.4 145.3,500.9 143.8,500.6 145.1,499.8 144.9,498.3 146.1,499.2'/><polygon points='162.8,489.7 163.0,491.6 164.8,492.3 163.1,493.1 163.1,495.0 161.8,493.6 159.9,494.2 160.8,492.5 159.7,490.9 161.6,491.2'/><polygon points='169.6,463.2 168.9,465.3 170.6,466.9 168.3,467.0 167.3,469.0 166.6,466.9 164.3,466.6 166.1,465.2 165.7,463.0 167.6,464.2'/><polygon points='151.6,438.7 151.0,440.0 151.9,441.3 150.4,441.0 149.5,442.3 149.2,440.8 147.8,440.3 149.1,439.6 149.1,438.1 150.2,439.1'/><polygon points='137.8,468.4 138.0,470.1 139.6,470.6 138.1,471.3 138.0,473.0 136.9,471.8 135.3,472.3 136.1,470.8 135.1,469.4 136.8,469.7'/><polygon points='134.3,482.1 134.0,483.6 135.2,484.5 133.7,484.7 133.2,486.0 132.6,484.7 131.1,484.6 132.2,483.6 131.8,482.2 133.1,482.9'/><polygon points='195.5,460.5 195.5,461.9 196.8,462.5 195.5,463.0 195.3,464.5 194.4,463.3 193.0,463.6 193.8,462.4 193.1,461.2 194.5,461.5'/><polygon points='169.4,475.9 169.8,478.1 171.9,478.8 169.9,479.7 169.9,482.0 168.3,480.4 166.2,481.0 167.2,479.1 165.9,477.3 168.1,477.6'/><polygon points='163.3,508.0 163.5,509.5 164.8,510.0 163.5,510.6 163.5,512.0 162.5,510.9 161.1,511.3 161.8,510.0 161.0,508.8 162.4,509.1'/></g><path d='M145.8 390.0 Q141.5 386.5 146.3 384.3 Q160.5 380.6 167.2 374.4 Q178.3 369.3 183.3 358.4 Q189.4 351.7 192.8 337.8 Q195.0 333.1 198.7 336.7 Q206.9 348.4 215.2 352.3 Q223.8 360.6 236.9 361.7 Q246.0 365.5 261.8 364.0 Q267.5 364.5 264.7 369.3 Q254.6 381.2 252.4 390.5 Q245.9 401.7 248.4 413.2 Q247.4 422.2 253.0 435.2 Q254.0 440.2 248.7 439.1 Q234.6 433.5 225.5 434.2 Q213.3 431.7 204.4 436.1 Q196.6 437.2 187.4 444.6 Q183.5 446.5 182.3 442.2 Q181.6 430.2 177.1 423.5 Q174.3 413.7 164.5 405.5 Q159.3 397.7 145.8 390.0 Z' fill='url(#gPinkBig)' stroke='#ff8ed0' stroke-width='1.8'/><path d='M166.9 384.9 Q164.5 383.0 167.2 381.8 Q175.0 379.8 178.7 376.4 Q184.7 373.5 187.5 367.5 Q190.9 363.9 192.8 356.2 Q193.9 353.6 196.0 355.6 Q200.5 362.0 205.0 364.2 Q209.8 368.7 217.0 369.4 Q222.0 371.4 230.7 370.6 Q233.8 370.9 232.3 373.6 Q226.7 380.1 225.5 385.2 Q222.0 391.4 223.3 397.7 Q222.8 402.6 225.8 409.8 Q226.4 412.5 223.5 411.9 Q215.8 408.8 210.7 409.3 Q204.0 407.8 199.1 410.3 Q194.8 410.9 189.8 414.9 Q187.6 416.0 187.0 413.7 Q186.6 407.0 184.1 403.4 Q182.6 397.9 177.2 393.5 Q174.3 389.1 166.9 384.9 Z' fill='#ffd0ec' opacity='0.50' filter='url(#blur3)'/><g fill='none' stroke='#e8d0f4' stroke-width='0.7' opacity='0.55'><path d='M 147.0 422.5 Q 155.0 470.5 195.0 510.5 Q 210.0 525.5 217.0 537.5'/><path d='M 195.0 444.5 Q 183.0 480.5 205.0 537.5'/><path d='M 198.0 442.5 Q 207.0 482.5 245.0 537.5'/><path d='M 223.0 442.5 Q 230.0 470.5 253.0 490.5'/><path d='M 167.0 444.5 Q 175.0 490.5 245.0 537.5'/></g><clipPath id='c5'><ellipse cx='182.0' cy='542.5' rx='22.0' ry='20.0' transform='rotate(0 182.0 542.5)'/></clipPath><ellipse cx='182.0' cy='542.5' rx='22.0' ry='20.0' fill='url(#bLilac)' transform='rotate(0 182.0 542.5)'/><g clip-path='url(#c5)' fill='#f4e8ff' opacity='0.85'><polygon points='184.9,553.0 184.1,554.6 185.3,556.0 183.5,555.8 182.5,557.3 182.1,555.6 180.4,555.1 181.9,554.2 181.9,552.4 183.2,553.6'/><polygon points='195.7,549.1 194.8,550.6 195.8,552.1 194.1,551.7 193.0,553.1 192.8,551.4 191.2,550.7 192.8,550.0 192.9,548.3 194.0,549.6'/><polygon points='189.1,524.7 189.7,526.1 191.2,526.3 190.1,527.2 190.4,528.7 189.1,527.9 187.8,528.7 188.1,527.2 187.0,526.2 188.5,526.1'/><polygon points='183.2,532.4 183.2,534.5 185.1,535.4 183.1,536.1 182.8,538.1 181.6,536.5 179.5,536.8 180.7,535.1 179.7,533.3 181.7,533.9'/><polygon points='166.3,552.9 166.8,554.3 168.2,554.5 167.1,555.3 167.4,556.7 166.2,555.9 164.9,556.6 165.3,555.2 164.3,554.3 165.7,554.2'/></g><path d='M204.4 508.2 Q204.0 504.0 208.6 505.5 Q220.5 512.0 229.0 512.0 Q239.7 515.4 249.7 514.2 Q257.5 515.8 268.7 512.0 Q273.0 511.5 272.5 515.3 Q269.2 525.3 270.6 532.1 Q269.5 540.9 275.7 549.8 Q278.1 557.3 287.3 566.6 Q290.0 570.5 285.5 570.9 Q272.7 569.8 265.6 572.5 Q255.2 573.4 250.0 580.0 Q244.7 583.6 240.2 592.6 Q238.0 595.5 235.5 592.3 Q230.7 582.5 224.7 578.5 Q219.0 571.2 208.8 568.0 Q202.2 563.5 189.4 561.9 Q185.0 560.5 187.8 557.3 Q197.2 550.1 200.3 543.5 Q206.9 536.2 206.0 526.6 Q207.5 519.5 204.4 508.2 Z' fill='url(#gPinkBot)' stroke='#ff90d0' stroke-width='1.8'/><path d='M213.5 517.4 Q213.3 515.1 215.9 515.9 Q222.4 519.5 227.1 519.5 Q232.9 521.4 238.4 520.7 Q242.7 521.6 248.9 519.5 Q251.2 519.2 251.0 521.4 Q249.2 526.8 249.9 530.6 Q249.3 535.4 252.7 540.3 Q254.1 544.4 259.1 549.6 Q260.6 551.7 258.1 551.9 Q251.1 551.3 247.2 552.8 Q241.5 553.3 238.6 556.9 Q235.7 558.9 233.2 563.9 Q232.0 565.5 230.6 563.7 Q228.0 558.3 224.7 556.1 Q221.5 552.1 215.9 550.3 Q212.3 547.8 205.3 547.0 Q202.8 546.2 204.4 544.5 Q209.6 540.5 211.3 536.9 Q214.9 532.8 214.4 527.5 Q215.2 523.6 213.5 517.4 Z' fill='#ffc8e8' opacity='0.50' filter='url(#blur3)'/><path d='M226.5 475.2 Q224.0 472.5 227.4 471.5 Q237.4 470.4 242.5 467.0 Q250.5 464.6 254.7 457.5 Q259.3 453.4 262.8 444.2 Q264.6 441.1 266.6 443.9 Q270.5 452.7 275.2 456.4 Q279.7 463.0 287.9 464.2 Q293.4 466.8 303.5 466.6 Q307.0 467.1 304.8 470.2 Q297.3 477.5 295.3 483.6 Q290.3 490.7 290.8 498.6 Q289.3 504.5 291.8 513.8 Q292.0 517.2 288.8 516.1 Q280.5 511.3 274.7 511.1 Q267.2 508.4 260.3 511.6 Q254.6 512.3 247.0 517.6 Q244.0 519.0 243.9 515.6 Q245.3 506.5 243.3 500.9 Q243.1 493.2 237.3 487.0 Q234.6 481.4 226.5 475.2 Z' fill='url(#gBlueSm)' stroke='#64ace0' stroke-width='1.8'/><path d='M238.3 471.4 Q236.9 469.9 238.8 469.3 Q244.3 468.7 247.1 466.9 Q251.5 465.5 253.8 461.7 Q256.3 459.4 258.2 454.3 Q259.2 452.6 260.3 454.2 Q262.5 459.0 265.1 461.1 Q267.6 464.7 272.1 465.4 Q275.1 466.8 280.6 466.6 Q282.6 466.9 281.4 468.6 Q277.2 472.6 276.1 476.0 Q273.3 479.9 273.6 484.3 Q272.8 487.5 274.2 492.6 Q274.3 494.5 272.5 493.9 Q268.0 491.3 264.8 491.1 Q260.7 489.7 256.9 491.4 Q253.7 491.8 249.6 494.7 Q247.9 495.5 247.8 493.6 Q248.6 488.6 247.5 485.5 Q247.4 481.3 244.2 477.9 Q242.7 474.8 238.3 471.4 Z' fill='#9cd4f4' opacity='0.50' filter='url(#blur3)'/><clipPath id='c6'><ellipse cx='317.0' cy='515.5' rx='23.0' ry='27.0' transform='rotate(0 317.0 515.5)'/></clipPath><ellipse cx='317.0' cy='515.5' rx='23.0' ry='27.0' fill='url(#bDkBlue)' transform='rotate(0 317.0 515.5)'/><g clip-path='url(#c6)' fill='#dfe8ff' opacity='0.85'><polygon points='325.2,528.4 325.8,530.0 327.6,530.2 326.2,531.3 326.6,533.0 325.1,532.0 323.6,532.9 324.1,531.2 322.8,530.0 324.5,530.0'/><polygon points='319.2,512.8 319.3,515.3 321.5,516.3 319.2,517.1 318.8,519.5 317.4,517.6 315.0,518.0 316.4,516.0 315.2,513.9 317.5,514.6'/><polygon points='307.6,494.2 308.0,495.8 309.5,496.1 308.2,496.9 308.4,498.5 307.2,497.5 305.8,498.2 306.3,496.7 305.2,495.6 306.8,495.6'/><polygon points='300.4,504.4 299.9,505.8 301.0,506.9 299.5,506.9 298.8,508.3 298.3,506.8 296.8,506.6 298.0,505.7 297.8,504.2 299.0,505.1'/><polygon points='309.1,516.4 309.3,518.4 311.3,519.1 309.4,520.0 309.4,522.0 308.0,520.5 306.0,521.1 307.0,519.3 305.8,517.6 307.8,518.0'/><polygon points='312.2,525.4 312.7,527.2 314.6,527.6 313.0,528.6 313.2,530.5 311.7,529.3 310.0,530.1 310.7,528.3 309.4,526.9 311.3,527.0'/><polygon points='331.7,508.4 331.9,510.2 333.5,510.8 331.9,511.5 331.8,513.3 330.6,512.0 328.9,512.5 329.8,510.9 328.8,509.4 330.5,509.8'/><polygon points='299.4,525.9 299.4,527.3 300.7,528.0 299.3,528.4 299.0,529.9 298.2,528.7 296.8,528.9 297.6,527.7 297.0,526.4 298.4,526.9'/><polygon points='326.1,502.6 325.5,504.4 326.8,505.8 324.9,505.7 324.0,507.4 323.4,505.6 321.6,505.2 323.1,504.1 322.9,502.2 324.4,503.4'/><polygon points='323.8,492.1 323.7,493.7 325.0,494.5 323.5,494.9 323.2,496.4 322.4,495.1 320.8,495.2 321.8,494.0 321.2,492.6 322.6,493.1'/><polygon points='300.2,512.2 300.4,513.8 301.9,514.4 300.4,515.0 300.3,516.7 299.2,515.4 297.6,515.8 298.4,514.4 297.6,513.1 299.2,513.4'/><polygon points='336.3,500.1 335.9,501.5 336.9,502.5 335.5,502.5 334.9,503.8 334.4,502.5 332.9,502.3 334.1,501.4 333.8,500.0 335.0,500.8'/></g><text x='0' y='0' fill='#fff' stroke='#fff' stroke-width='5' stroke-linejoin='miter' font-family='Liberation Sans' font-weight='700' font-size='62.2' transform='translate(91.1 155.0) scale(0.613 1)'>BIRTHDAY</text><text x='0' y='0' fill='#e6c8f4' font-family='Liberation Sans' font-weight='700' font-size='17' transform='translate(148.6 180.1) scale(1.2 1)'>O</text><text x='0' y='0' fill='#e6c8f4' font-family='Liberation Sans' font-weight='700' font-size='17' transform='translate(186.4 180.1) scale(1.2 1)'>Y</text><text x='0' y='0' fill='#e6c8f4' font-family='Liberation Sans' font-weight='700' font-size='17' transform='translate(204.1 180.1) scale(1.2 1)'>O</text><text x='0' y='0' fill='#e6c8f4' font-family='Liberation Sans' font-weight='700' font-size='17' transform='translate(226.4 180.1) scale(1.2 1)'>U</text><text x='89.0' y='203.5' fill='#f0d8f8' font-family='Liberation Sans' font-weight='700' font-size='16'>T</text><text x='102.5' y='214.0' fill='#f4eafc' font-family='Liberation Sans' font-weight='400' font-size='9.6' letter-spacing='0.33' stroke='#f4eafc' stroke-width='0.25'>Lorem ipsum dolor sit amet, consecte-</text><text x='123.0' y='225.0' fill='#f4eafc' font-family='Liberation Sans' font-weight='400' font-size='9.6' letter-spacing='0.33' stroke='#f4eafc' stroke-width='0.25'>tuer adipiscing elit, sed diam.</text><g fill='none' stroke='#e6c2f0' stroke-linecap='round' stroke-linejoin='round'><path d='M 145.5 56.5 L 133.0 96.5' stroke-width='7.0'/><path d='M 160.0 52.5 L 143.5 97.0' stroke-width='8.0'/><path d='M 129.0 80.0 Q 142.0 78.0 156.0 77.0' stroke-width='4.0'/><path d='M 137.5 58.5 Q 142.0 54.0 147.0 55.0' stroke-width='4.5'/><path d='M 168.5 70.0 Q 159.0 67.0 156.0 83.5 Q 154.0 96.5 160.5 96.5 Q 167.0 95.0 170.5 77.5' stroke-width='6.5'/><path d='M 172.0 68.5 L 167.5 96.5' stroke-width='7.0'/><path d='M 180.5 68.5 L 174.5 112.5' stroke-width='7.5'/><path d='M 178.5 78.5 Q 185.0 68.0 191.5 69.5 Q 196.0 75.5 192.0 86.5 Q 187.0 96.5 178.5 93.5' stroke-width='6.0'/><path d='M 205.0 68.5 L 198.5 113.0' stroke-width='7.5'/><path d='M 203.0 78.5 Q 210.0 68.0 216.5 69.5 Q 221.0 75.5 217.0 86.5 Q 212.0 96.5 203.5 93.5' stroke-width='6.0'/><path d='M 224.5 70.0 Q 224.0 82.5 226.0 92.0 Q 228.5 97.5 234.5 92.5 Q 241.0 84.5 245.5 70.5' stroke-width='6.5'/><path d='M 253.0 68.5 Q 243.5 95.5 236.5 108.0 Q 233.5 113.5 229.5 108.5' stroke-width='7.5'/></g></g></svg></div><!--/PAGE-->

<!-- MENU -->
<div class="a" style="left:766px;top:77px;width:253.5px;height:509px;border-radius:6px;background:#e5e9e7;box-shadow:0 5px 10px rgba(0,0,0,0.14),0 1px 3px rgba(0,0,0,0.08)"></div>
<svg class="i" style="left:801px;top:97px;stroke:#a9aba9;stroke-width:1.2" width="18" height="19" viewBox="0 0 18 19"><path d="M4 1.5H14Q16.5 1.5 16.5 4V15Q16.5 17.5 14 17.5H4Q1.5 17.5 1.5 15V4Q1.5 1.5 4 1.5Z"/><path d="M5.5 1.5V4.5H12.5V1.5"/><circle cx="9" cy="11" r="2.2"/></svg>
<div class="a" style="left:797.5px;top:126px;font-size:10.5px;color:#a9aba9">Save</div>
<svg class="i" style="left:879px;top:97px;stroke-width:1.2" width="19" height="19" viewBox="0 0 19 19"><path d="M5.5 11.5H4Q1.5 11.5 1.5 9V4Q1.5 1.5 4 1.5H9Q11.5 1.5 11.5 4V5.5"/><rect x="6.5" y="6.5" width="11" height="11" rx="2.5"/><path d="M12 9.8V14.2M9.8 12H14.2"/></svg>
<div class="a" style="left:866px;top:125.5px;font-size:11px;color:#333">Duplicate</div>
<svg class="i" style="left:960px;top:96px;stroke-width:1.2" width="18" height="20" viewBox="0 0 18 20"><path d="M9 13V2M5.5 5.5L9 2 12.5 5.5M6 9H4Q2 9 2 11V16Q2 18.5 4.5 18.5H13.5Q16 18.5 16 16V11Q16 9 14 9H12"/></svg>
<div class="a" style="left:955px;top:126px;font-size:11px;color:#333">Share</div>

<div class="a" style="left:777px;top:155px;width:240px;height:28px;background:#d9dcda"></div>
<div class="a" style="left:773px;top:151px;width:248px;height:36px;border:4px solid #3a3ccb;border-radius:3px"></div>
<svg class="i" style="left:779px;top:160px;stroke-width:1.2" width="19" height="19" viewBox="0 0 19 19"><path d="M4 9V3.5Q4 1.5 6 1.5H13Q15 1.5 15 3.5V9M6.8 5H12.2M6.8 7.8H10.5"/><path d="M1.5 10.5Q1.5 9 3 9H5.5L7 11.5H12L13.5 9H16Q17.5 9 17.5 10.5V15Q17.5 17.5 15 17.5H4Q1.5 17.5 1.5 15Z"/></svg>
<div class="mi" style="top:162.5px">Save as...</div>
<div class="mi" style="left:auto;right:20px;top:163px;font-size:11.1px;color:#a3a5a3">Ctrl+Shift+S</div>

<svg class="i" style="left:779px;top:193px;stroke-width:1.2" width="19" height="19" viewBox="0 0 19 19"><path d="M5 6V3.5Q5 1.5 7 1.5H12Q14 1.5 14 3.5V6"/><path d="M5 14H3.5Q1.5 14 1.5 12V8.5Q1.5 6 4 6H15Q17.5 6 17.5 8.5V12Q17.5 14 15.5 14H14"/><rect x="5" y="10.5" width="9" height="7" rx="1.5"/><path d="M13.5 8.5H14.2"/></svg>
<div class="mi" style="top:196px">Print...</div>
<div class="mi" style="left:auto;right:20px;top:196.5px;font-size:11px;color:#a3a5a3">Ctrl+P</div>
<div class="sep" style="top:222px"></div>

<svg class="i" style="left:779px;top:235px;stroke-width:1.2" width="19" height="19" viewBox="0 0 19 19"><path d="M2.5 5.5V4Q2.5 1.5 5 1.5H14Q16.5 1.5 16.5 4V5.5M2.5 13.5V15Q2.5 17.5 5 17.5H14Q16.5 17.5 16.5 15V13.5"/></svg>
<div class="a" style="left:779.5px;top:241px;font-size:6.2px;font-weight:700;color:#333;letter-spacing:-0.2px;line-height:7px">PDF/A</div>
<div class="mi" style="top:237.5px">Save as PDF/A...</div>

<svg class="i" style="left:779px;top:268px;stroke-width:1.2" width="19" height="20" viewBox="0 0 19 20"><path d="M8 17.5H4Q1.5 17.5 1.5 15V4Q1.5 1.5 4 1.5H13Q15.5 1.5 15.5 4V9"/><path d="M5 9.5L7.5 5.5 10 9.5M6.2 7.5H9"/><rect x="10" y="11" width="7.5" height="7" rx="1.2"/><path d="M11.5 16.5L13.5 14 16 16.5"/></svg>
<div class="mi" style="top:271px">Image PDF...</div>

<svg class="i" style="left:779px;top:301px;stroke:#b0b2b0;stroke-width:1.2" width="19" height="20" viewBox="0 0 19 20"><path d="M8 17.5H4Q1.5 17.5 1.5 15V4Q1.5 1.5 4 1.5H13Q15.5 1.5 15.5 4V9"/><path d="M5 9.5L7.5 5.5 10 9.5"/><rect x="10.5" y="13" width="7" height="5.5" rx="1.2"/><path d="M12 13V11.5Q14 9.2 16 11.5V13"/></svg>
<div class="mi" style="top:304.5px;color:#a8aaa8;letter-spacing:0.3px">Remove Password</div>
<div class="sep" style="top:331px"></div>

<div class="a" style="left:777.5px;top:344.5px;font-size:10.8px;font-weight:700;color:#4a4a4a;letter-spacing:-0.3px">UPDF Cloud</div>

<svg class="i" style="left:778px;top:377px;stroke-width:1.2" width="21" height="20" viewBox="0 0 21 20"><path d="M6 14H5Q1.5 14 1.5 10.5 1.5 7.5 4.8 7.2 5.5 2 10.5 2 15.5 2 16.2 7.2 19.5 7.5 19.5 10.5 19.5 14 16 14H15"/><path d="M10.5 18.5V9.5M7.5 12.5L10.5 9.5 13.5 12.5"/></svg>
<div class="mi" style="top:379.5px">Save to UPDF Cloud</div>

<svg class="i" style="left:779px;top:411px;stroke-width:1.2" width="19" height="19" viewBox="0 0 19 19"><path d="M8 6.5L10.5 4Q13 1.5 15.5 4 18 6.5 15.5 9L13 11.5M11 12.5L8.5 15Q6 17.5 3.5 15 1 12.5 3.5 10L6 7.5M7 12L12 7"/></svg>
<div class="mi" style="top:413px">UPDF Share</div>
<div class="sep" style="top:439px"></div>

<div class="a" style="left:777.5px;top:453px;font-size:10.8px;font-weight:700;color:#4a4a4a;letter-spacing:0px">Save as Other</div>

<svg class="i" style="left:779px;top:485px;stroke-width:1.2" width="19" height="20" viewBox="0 0 19 20"><path d="M8 1.5H5Q1.5 1.5 1.5 5V15Q1.5 18.5 5 18.5H7M12 1.5H14Q16.5 1.5 16.5 4V8"/><rect x="9.5" y="10" width="8" height="8.5" rx="1.8"/><path d="M5 5L8.5 8.5M8.5 5.5V8.5H5.5"/></svg>
<div class="mi" style="top:487.5px">Reduce File Size...</div>

<svg class="i" style="left:778px;top:518px;stroke-width:1.2" width="21" height="21" viewBox="0 0 21 21"><path d="M9 18.5Q1.5 16 1.5 9.5V4L9 1.5 16.5 4V8"/><path d="M9 1.5V18.5"/><rect x="11.5" y="13.5" width="7.5" height="6" rx="1.3"/><path d="M13.2 13.5V12Q15.2 9.5 17.2 12V13.5"/></svg>
<div class="mi" style="top:521.5px;letter-spacing:0.33px">Protect Using Password...</div>

<svg class="i" style="left:778px;top:551px;stroke-width:1.2" width="21" height="21" viewBox="0 0 21 21"><path d="M10.5 1.5V8M8 5.8L10.5 8.3 13 5.8"/><path d="M6.5 8.5L1.8 11.2 10.5 15.5 19.2 11.2 14.5 8.5"/><path d="M2.5 14.5L1.8 15 10.5 19.5 19.2 15 18.5 14.5"/></svg>
<div class="mi" style="top:555.5px">Save as Flatten...</div>

<!-- ARROW -->
<svg class="a" style="left:920px;top:74px" width="45" height="82" viewBox="920 74 45 82"><path d="M957.2 78.8 L958.8 79.4 L939 137.5 L933.2 135.2 Z" fill="#3a3ccb"/><path d="M929 151.5 L927.2 131 L943.5 138.2 Z" fill="#3a3ccb"/></svg>

<!-- BOTTOM BAR -->
<div class="a" style="left:625px;top:722px;width:394px;height:42px;border-radius:9px;background:#e8ebe8;box-shadow:0 0 0 1px #dfe2df"></div>
<div class="a" style="left:633px;top:733px;width:15px;height:15px;border-radius:50%;background:#d6d9d6"></div>
<svg class="i" style="left:636px;top:736px;stroke-width:1.2" width="9" height="9" viewBox="0 0 9 9"><path d="M3.2 1.8L5.8 4.5 3.2 7.2"/></svg>
<svg class="i" style="left:661px;top:732px;stroke-width:1.2" width="19" height="17" viewBox="0 0 19 17"><path d="M9.5 3.5V15M3.5 1.5H15.5Q17.5 1.5 17.5 3.5V13.5Q17.5 15.5 15.5 15.5H3.5Q1.5 15.5 1.5 13.5V3.5Q1.5 1.5 3.5 1.5Z"/><path d="M4.5 5.5H7M4.5 8.5H7M4.5 11.5H7M12 5.5H14.5M12 8.5H14.5M12 11.5H14.5"/></svg>
<svg class="i" style="left:698px;top:731px;stroke-width:1.2" width="21" height="19" viewBox="0 0 21 19"><path d="M6 13.5H4.5Q1.5 13.5 1.5 10.5V4.5Q1.5 1.5 4.5 1.5H16.5Q19.5 1.5 19.5 4.5V10.5Q19.5 13.5 16.5 13.5H15"/><path d="M10.5 12L13.5 17H7.5Z"/></svg>
<div class="a" style="left:731px;top:728px;width:1px;height:14px;background:#d6d9d6"></div>
<div class="a" style="left:739px;top:726px;width:30px;height:30px;border-radius:7px;border:1.2px solid #7cc494;background:#eef1ee"></div>
<div class="a" style="left:749.5px;top:733px;font-size:13px;color:#333">1</div>
<svg class="i" style="left:784px;top:735px;stroke:#b5b7b5;stroke-width:1.2" width="14" height="9" viewBox="0 0 14 9"><path d="M2 6.5L7 2 12 6.5"/></svg>
<svg class="i" style="left:821px;top:737px;stroke:#b5b7b5;stroke-width:1.2" width="14" height="9" viewBox="0 0 14 9"><path d="M2 2.5L7 7 12 2.5"/></svg>
<div class="a" style="left:850px;top:732px;width:1px;height:14px;background:#d6d9d6"></div>
<div class="a" style="left:861px;top:728px;width:42px;height:27px;border-radius:6px;background:#f1f3f1"></div>
<div class="a" style="left:871px;top:735px;font-size:11px;color:#333">51%</div>
<div class="a" style="left:921px;top:740px;width:12px;height:1.3px;background:#444"></div>
<svg class="i" style="left:957px;top:734px;stroke-width:1.3" width="14" height="14" viewBox="0 0 14 14"><path d="M7 1V13M1 7H13"/></svg>
<svg class="i" style="left:992px;top:733px;stroke-width:1.2" width="19" height="16" viewBox="0 0 19 16"><rect x="1.2" y="1.2" width="16.6" height="13.6" rx="2.5"/></svg>
<div class="a" style="left:996.5px;top:737px;font-size:7px;font-weight:700;color:#333;line-height:8px;letter-spacing:-0.2px">1:1</div>

<div id="content"></div>
</body></html>
